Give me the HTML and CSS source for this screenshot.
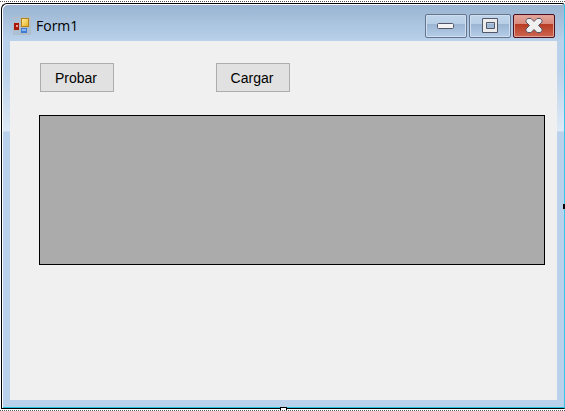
FILE: index.html
```html
<!DOCTYPE html>
<html lang="es">
<head>
  <meta charset="UTF-8" />
  <meta name="viewport" content="width=device-width, initial-scale=1.0"/>
  <title>Form1</title>
  <link rel="stylesheet" href="styles.css">
</head>
<body>
  <div class="designer">
    <div class="window">
      <header class="title-bar">
        <svg class="app-icon" width="18" height="18" viewBox="0 0 18 18" aria-hidden="true">
          <defs>
            <linearGradient id="gold" x1="0" y1="0" x2="1" y2="1">
              <stop offset="0" stop-color="#fff0a0"/>
              <stop offset="1" stop-color="#e8b020"/>
            </linearGradient>
          </defs>
          <rect width="18" height="18" fill="#b4bcc4"/>
          <path d="M1 1h6v4h-6z M1 14h6v3h-6z M15 11h2v6h-2z" fill="#a9c0da"/>
          <rect x="1" y="6" width="5" height="7" fill="#a81808"/>
          <rect x="3" y="8" width="2" height="2" fill="#f0a090"/>
          <rect x="8.5" y="1.5" width="7" height="8" fill="url(#gold)" stroke="#b08418"/>
          <rect x="8" y="11" width="6" height="5" fill="#3f7bd4"/>
          <rect x="9" y="12" width="4" height="2" fill="#8ab8f4"/>
        </svg>
        <h1>Form1</h1>
        <div class="window-buttons">
          <button type="button" class="window-btn" aria-label="Minimize">
            <svg width="18" height="8" viewBox="0 0 18 8">
              <rect x="0.5" y="1.5" width="16" height="5" rx="1" fill="#f4f4f4" stroke="#535666"/>
            </svg>
          </button>
          <button type="button" class="window-btn" aria-label="Maximize">
            <svg width="18" height="16" viewBox="0 0 18 16">
              <path d="M1.500.5h15v14h-15z M5.500 4.500v6h8v-6z" fill="#ececec" fill-rule="evenodd" stroke="#535666"/>
            </svg>
          </button>
          <button type="button" class="window-btn close-btn" aria-label="Close">
            <svg width="18" height="16" viewBox="0 0 18 16">
              <path d="M2.500.5h3.500L9 3.500l3-3h3.500l1.500 2v1.500L13.500 7.500l3.500 3.500v1.500l-1.500 2h-3.500l-3-3-3 3h-3.500l-1.500-2v-1.500l3.500-3.500L1 4v-1.500z" fill="#f0f0f0" stroke="#535666" stroke-linejoin="round"/>
            </svg>
          </button>
        </div>
      </header>
      <main class="client">
        <div class="actions">
          <button type="button" class="form-btn">Probar</button>
          <button type="button" class="form-btn">Cargar</button>
        </div>
        <div class="data-grid"></div>
      </main>
    </div>
    <span class="handle handle-right"></span>
    <span class="handle handle-bottom"></span>
  </div>
</body>
</html>
```

FILE: styles.css
```css
* {
  box-sizing: border-box;
  margin: 0;
  padding: 0;
}

body {
  font-family: "Liberation Sans", Arial, sans-serif;
  font-size: 14px;
  color: #000;
  background: #fff;
}

.designer {
  position: relative;
  display: flex;
  min-height: 100vh;
  padding: 3px 0 2px 1px;
}

/* dotted selection lines above and below the form */
.designer::before,
.designer::after {
  content: "";
  position: absolute;
  left: 0;
  right: 0;
  height: 1px;
  background: repeating-linear-gradient(90deg, #555 0 1px, #fff 1px 2px);
}

.designer::before {
  top: 1px;
}

.designer::after {
  bottom: 0;
}

.window {
  flex: 1;
  display: flex;
  flex-direction: column;
  padding: 0 7px 8px 8px;
  border: 1px solid #000;
  border-right-color: #35c5e8;
  border-radius: 6px 3px 0 0;
  background:
    linear-gradient(#99b4d1, #b9d1ea 37px, #b9d1ea 64px, #dce8f5 124px, #dce8f5 127px, #b9d1ea 128px);
  box-shadow: inset 1px 1px #fff, inset 0 -1px #22c4dc;
}

.title-bar {
  display: flex;
  align-items: center;
  height: 37px;
  padding: 7px 2px 0 3px;
}

.title-bar h1 {
  flex: 1;
  margin-left: 5px;
  font-family: "Open Sans", "Segoe UI", sans-serif;
  font-size: 14px;
  font-weight: 400;
  line-height: 20px;
}

.window-buttons {
  display: flex;
  gap: 2px;
}

.window-btn {
  display: flex;
  align-items: center;
  justify-content: center;
  width: 42px;
  height: 24px;
  border: 1px solid #647590;
  border-radius: 2px;
  background: linear-gradient(#c1d5ea, #b8cfe7 40%, #9ab4d2 41%, #b5cde8);
  box-shadow: inset 0 0 0 1px #cfdfef;
}

.close-btn {
  border-color: #4d1020;
  background: linear-gradient(#e5a79c, #d98a7c 40%, #b83a22 41%, #cc6650);
  box-shadow: inset 0 0 0 1px #e0a297;
}

.client {
  flex: 1;
  padding: 22px 12px 22px 29px;
  background: #f0f0f0;
}

.actions {
  display: flex;
  gap: 102px;
  margin: 0 1px 23px;
}

.form-btn {
  width: 74px;
  height: 29px;
  padding-right: 2px;
  border: 1px solid #adadad;
  background: #e1e1e1;
  font: inherit;
  color: #000;
}

.data-grid {
  height: 150px;
  border: 1px solid #000;
  background: #ababab;
}

.handle {
  position: absolute;
  border: 1px solid #000;
  background: #fff;
}

.handle-right {
  top: 50%;
  right: 0;
  width: 1px;
  height: 5px;
  margin-top: -2px;
}

.handle-bottom {
  bottom: 0;
  left: 50%;
  width: 7px;
  height: 4px;
  margin-left: -3px;
  border-bottom: 0;
}
```
